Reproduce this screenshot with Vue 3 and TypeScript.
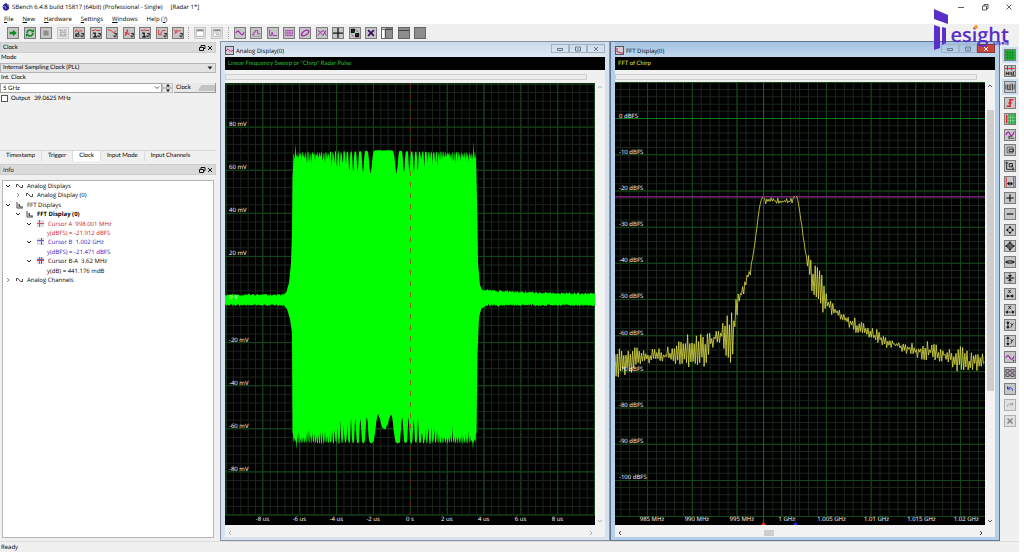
<script setup lang="ts">
import { ref } from 'vue'

interface Part { d: string; s?: string; f?: string; w?: number }
interface Icon { name: string; parts: Part[]; cls?: string }
interface TreeRow { depth: number; open?: boolean; icon?: 'wave' | 'fft' | 'a' | 'b' | 'ba'; text: string; tone?: string }

const K = '#111'
const P = '#a020a8'
const R = '#e0202c'
const G = '#0d8a22'
const B = '#3434c8'
const tag: Part = { d: 'M8.5 6.5h3v2h-2M11.5 10.5h-3v-2', s: K, w: 1 }
const frame: Part = { d: 'M2.5 2.5h7v7h-7z', s: '#555' }

const mainIcons: Icon[] = [
  { name: 'Start', parts: [{ d: 'M2 4.500h4V2l4.500 4L6 10V7.500H2z', f: G }] },
  { name: 'Start loop', parts: [{ d: 'M2.500 6a3.500 3.500 0 0 1 6-2.500M9.500 6a3.500 3.500 0 0 1-6 2.500', s: G, w: 2 }, { d: 'M7 5h4V1zM5 7H1v4z', f: G }] },
  { name: 'Stop', parts: [{ d: 'M3 3h6v6H3z', f: '#8d8d8d' }] },
  { name: 'Force trigger', cls: 'flat', parts: [{ d: 'M1.500 2.500h4M7 2.500h3M2 5h8M2 7.500h3M6.500 7.500h4M2 9.500h8', s: '#888' }] },
  { name: 'Average', parts: [{ d: 'M1 5l2-3 2 3 2-2 3 1', s: R }, { d: 'M2 10l4-5M2 7h4v3H2z', s: K }, tag] },
  { name: 'Info', parts: [{ d: 'M1 3h3l1-1 2 1h4', s: R }, { d: 'M2.500 6H5v4M2.500 10.500h5', s: K, w: 1.5 }, tag] },
  { name: 'Line graph', parts: [{ d: 'M1 2l4 1 3 3 3-3', s: R }, tag] },
  { name: 'Spectrum graph', parts: [{ d: 'M1 9h1V5l1 3 1-6 1 6 2-1', s: R }, tag] },
  { name: 'Info graph', parts: [{ d: 'M1 3h3l1-1 2 1h4', s: R }, { d: 'M2.500 6H5v4M2.500 10.500h5', s: K, w: 1.5 }, tag] },
  { name: 'Bar graph', parts: [{ d: 'M2 2v6h3V5l2-2h3', s: R }, tag] },
  { name: 'Scatter graph', parts: [{ d: 'M1 2l4 4M5 2L2 7M5 4l4-1', s: R }, tag] }
]
const reportIcons: Icon[] = [
  { name: 'Report', cls: 'flat', parts: [{ d: 'M1.500 2h9v8h-9z', s: '#aaa', f: '#fff' }, { d: 'M2 3h8', s: '#888', w: 2 }] },
  { name: 'Report list', cls: 'flat', parts: [{ d: 'M1.500 2h9v8h-9z', s: '#aaa', f: '#fff' }, { d: 'M2 3h8', s: '#888', w: 2 }, { d: 'M3 6h6M5 8h4', s: '#999' }] }
]
const displayIcons: Icon[] = [
  { name: 'Analog display', parts: [{ d: 'M1 6c2-4 3-3 5 0s3 3 5-1', s: P, w: 1.4 }] },
  { name: 'Digital display', parts: [{ d: 'M1 8h2.500V5H5V3h3v4h3', s: P }, { d: 'M1 10h10', s: '#999' }] },
  { name: 'FFT display', parts: [{ d: 'M2 2v7h2l1-4 1 4h5', s: P }] },
  { name: 'Table display', parts: [{ d: 'M1 3h10M1 5h10M1 7h10M1 9h10', s: P }, { d: 'M3 2v8M6 2v8M9 2v8', s: '#b99ac0' }] },
  { name: 'XY display', parts: [{ d: 'M2 9C1 6 7 1 10 3S5 11 2 9z', s: P, w: 1.4 }] },
  { name: 'Multi display', parts: [{ d: 'M1 9l3-4 3 4 4-6M1 3l3 2 4-2 3 6', s: P }] },
  { name: 'Cross', parts: [{ d: 'M6 0v12M0 6h12', s: K, w: 1.5 }] },
  { name: 'Cascade', parts: [{ d: 'M1 1h5v5H1zM6 6h5v5H6z', f: K }, { d: 'M3 3l6 6', s: G }, { d: 'M7 2l3 3M2 8l2 2', s: P }] },
  { name: 'Close all', parts: [{ d: 'M2.500 2.500l7 7M9.500 2.500l-7 7', s: '#301060', w: 2 }] },
  { name: 'Dock left', parts: [{ d: 'M0 0h4v12H0z', f: '#fff' }, { d: 'M0 1.500h12M4 2v10', s: '#222' }] },
  { name: 'Dock top', parts: [{ d: 'M0 3h12', s: '#333' }] },
  { name: 'Full screen', parts: [] }
]
displayIcons.slice(9).forEach(i => { i.cls = 'dark' })

const sideIcons: Icon[] = [
  { name: 'Grid', cls: 'on', parts: [{ d: 'M0 0h12v12H0z', f: '#26b33a' }, { d: 'M3 0v12M6 0v12M9 0v12M0 3h12M0 6h12M0 9h12', s: '#0a7a1c', w: 0.6 }] },
  { name: 'Hide', parts: [{ d: 'M0 3h12', s: R }, { d: 'M3 0v5M8 0v5', s: B }, { d: 'M1.500 7v4M4 7v4M1.500 9H4M6 7v4M8 7v4h1.500M11.500 7H10v4h1.500', s: K }] },
  { name: 'Signals', cls: 'on', parts: [{ d: 'M1 3v6M3 3v6h2V3M5 9h2V2M9 2v8M11 3v6', s: '#333' }] },
  { name: 'Trigger slope', parts: [{ d: 'M2 10h4V2h4M4 6h4', s: R, w: 1.8 }] },
  { name: 'Scale', parts: [{ d: 'M4 0h8v12H4z', f: '#28aa3c' }, { d: 'M2 1v10M1 3h2M1 6h2M1 9h2', s: R, w: 1.5 }, { d: 'M6.500 0v12M9.500 0v12M4 4h8M4 8h8', s: '#bce8c0', w: 0.6 }] },
  { name: 'Measure', parts: [{ d: 'M1 6c2-5 4-4 5-1s3 2 5-3', s: P, w: 1.4 }, { d: 'M4 8h5M4 10h7M5 7v3', s: '#444' }] },
  { name: 'Zoom box', parts: [frame, { d: 'M5 5h5v3H5z', s: K }] },
  { name: 'Zoom axes', parts: [{ d: 'M2 1v9h9M2 1L1 3M2 1l1 2M11 10l-2-1M11 10l-2 1', s: K }, { d: 'M5 3h4v4H5zM7 5l3 3', s: K }] },
  { name: 'Cursors', parts: [{ d: 'M1.500 0v12', s: R }, { d: 'M10.500 0v12', s: B }, { d: 'M3 8h6M3 8l2-2v4zM9 8L7 6v4z', s: K, f: K, w: 0.7 }] },
  { name: 'Zoom in', parts: [{ d: 'M6 1.500v9M1.500 6h9', s: K, w: 1.4 }] },
  { name: 'Zoom out', parts: [{ d: 'M2 6h8', s: K, w: 1.4 }] },
  { name: 'Expand', parts: [{ d: 'M1 6l3-2v4zM11 6L8 4v4zM6 1L4 4h4zM6 11L4 8h4z', f: K }] },
  { name: 'Fit', parts: [{ d: 'M3.500 3.500h5v5h-5z', f: '#666', s: '#444' }, { d: 'M0 6l3-2v4zM12 6L9 4v4zM6 0L4 3h4zM6 12L4 9h4z', f: K }] },
  { name: 'Fit horizontal', parts: [{ d: 'M3.500 4.500h5v3h-5z', f: '#888', s: '#333' }, { d: 'M0 6l3-2v4zM12 6L9 4v4z', f: K }] },
  { name: 'Fit vertical', parts: [{ d: 'M1 6h10', s: '#333', w: 1.6 }, { d: 'M6 5L4 3h4zM6 7L4 9h4zM6 0v4M6 8v4', f: K, s: K, w: 0.7 }] },
  { name: 'X compress', parts: [{ d: 'M4 1l3 4M7 1L4 5', s: K }, { d: 'M1 8.500h10M5 8.500L3 7v3zM7 8.500L9 7v3z', s: K, f: K, w: 0.8 }] },
  { name: 'X expand', parts: [{ d: 'M4 1l3 4M7 1L4 5', s: K }, { d: 'M1 8.500h10M1 8.500L3 7v3zM11 8.500L9 7v3z', s: K, f: K, w: 0.8 }] },
  { name: 'Y compress', parts: [{ d: 'M3.500 1v10M3.500 5L2 3h3zM3.500 7L2 9h3z', s: K, f: K, w: 0.8 }, { d: 'M7 4l1.500 2L10 4M8.500 6L7 9', s: K }] },
  { name: 'Y expand', parts: [{ d: 'M3.500 1v10M3.500 1L2 3h3zM3.500 11L2 9h3z', s: K, f: K, w: 0.8 }, { d: 'M7 4l1.500 2L10 4M8.500 6L7 9', s: K }] },
  { name: 'Waveform', parts: [{ d: 'M1 7c2-4 3-3 5 0s3 2 5-2', s: P, w: 1.4 }, { d: 'M9 11h2V9z', f: K }] },
  { name: 'Table', parts: [{ d: 'M1 2h4v3H1zM7 2h4v3H7zM1 7h4v3H1zM7 7h4v3H7z', s: '#333' }, { d: 'M5 3h2M5 9h2', s: P }] },
  { name: 'Undo', parts: [{ d: 'M3 3v3h3M3 6c2-3 6-2 6 2', s: B, w: 1.2 }] },
  { name: 'Redo', cls: 'pale', parts: [{ d: 'M9 3v3H6M9 6C7 3 3 4 3 8', s: '#999' }] },
  { name: 'Delete', cls: 'pale', parts: [{ d: 'M3 3l6 6M9 3l-6 6', s: '#888', w: 2 }] }
]

const groups = [
  { key: 'main', icons: mainIcons },
  { key: 'report', icons: reportIcons },
  { key: 'display', icons: displayIcons }
]
const menus = [['F', 'ile'], ['N', 'ew'], ['H', 'ardware'], ['S', 'ettings'], ['W', 'indows']]
const tabs = ['Timestamp', 'Trigger', 'Clock', 'Input Mode', 'Input Channels']
const activeTab = ref('Clock')
const rate = ref('5 GHz')
const output = ref(false)

const tree: TreeRow[] = [
  { depth: 0, open: true, icon: 'wave', text: 'Analog Displays' },
  { depth: 1, open: false, icon: 'wave', text: 'Analog Display (0)' },
  { depth: 0, open: true, icon: 'fft', text: 'FFT Displays' },
  { depth: 1, open: true, icon: 'fft', text: 'FFT Display (0)', tone: 'strong' },
  { depth: 2, open: true, icon: 'a', text: 'Cursor A  998.001 MHz', tone: 'red' },
  { depth: 2, text: 'y(dBFS) = -21.912 dBFS', tone: 'red' },
  { depth: 2, open: true, icon: 'b', text: 'Cursor B  1.002 GHz', tone: 'blue' },
  { depth: 2, text: 'y(dBFS) = -21.471 dBFS', tone: 'blue' },
  { depth: 2, open: true, icon: 'ba', text: 'Cursor B-A  3.62 MHz' },
  { depth: 2, text: 'y(dB) = 441.176 mdB' },
  { depth: 0, open: false, icon: 'wave', text: 'Analog Channels' }
]

const W = 370
const H = 442
function noise(seed: number) {
  let s = seed
  return () => {
    s = (s * 1664525 + 1013904223) % 4294967296
    return s / 4294967296
  }
}
function lines(origin: number, step: number, limit: number, vertical: boolean, end: number, start = 0) {
  let d = ''
  const first = Math.ceil((start - origin) / step)
  for (let k = first; origin + k * step <= limit; k++) {
    const v = (origin + k * step).toFixed(1)
    d += vertical ? `M${v} 0V${end}` : `M0 ${v}H${W}`
  }
  return d
}
type Key = [number, number, number]
function sample(keys: Key[], x: number): [number, number] {
  for (let i = 1; i < keys.length; i++) {
    if (x <= keys[i][0]) {
      const a = keys[i - 1]
      const b = keys[i]
      const t = (x - a[0]) / (b[0] - a[0])
      return [a[1] + (b[1] - a[1]) * t, a[2] + (b[2] - a[2]) * t]
    }
  }
  const l = keys[keys.length - 1]
  return [l[1], l[2]]
}

function chirp() {
  const rnd = noise(11)
  const upKeys: Key[] = [[0, 213, 1], [58, 213, 1], [61, 211, 1], [64, 200, 0], [66, 180, 0], [67, 150, 0], [67.5, 95, 0], [69, 70, 0], [249.500, 68, 0], [251, 75, 0], [252.500, 140, 0], [253, 180, 0], [255, 202, 0], [257, 208, 1], [270, 209, 1], [310, 211, 1], [370, 212, 1]]
  const dnKeys: Key[] = [[0, 221, 1], [59, 221, 1], [62, 226, 0], [65, 236, 0], [67, 250, 0], [67.5, 350, 0], [251.500, 350, 0], [252.500, 270, 0], [254, 235, 0], [256, 225, 1], [262, 221, 1], [370, 221, 1]]
  const up: string[] = []
  const dn: string[] = []
  for (let x = 0; x <= W; x += 0.5) {
    let [t, ta] = sample(upKeys, x)
    let [b, ba] = sample(dnKeys, x)
    if (x > 68 && x < 251) {
      const u = Math.abs(x - 158.500)
      const v = Math.abs(x - 159.500)
      const pu = Math.pow(Math.abs(Math.cos(Math.PI * (u * u - 169) / 251)), 6)
      const pv = Math.pow(Math.abs(Math.cos(Math.PI * (v * v - 42) / 270)), 6)
      const r = u > 36 ? 0.15 + rnd() * 0.85 : 1
      t = 67 + Math.min(u / 20, 3) + pu * r * (24 - u * 0.1) + (u > 36 ? rnd() * 3 - 2 : 0)
      b = 361 - pv * r * (29 - v * 0.15) - rnd() * 2
      if (x === 70.500) t = 61
      if (x === 248.500) t = 58
      if (x === 71.500 || x === 248) b = 367
    } else {
      t -= ta * rnd() * 2.500
      b += ba * rnd() * 2.500
    }
    up.push(`${x} ${t.toFixed(1)}`)
    dn.unshift(`${x} ${b.toFixed(1)}`)
  }
  return `M${up.join('L')}L${dn.join('L')}Z`
}

function spectrum() {
  const rnd = noise(5)
  const keys: Key[] = [
    [0, 280, 17], [20, 277, 13], [28, 275, 7], [50, 273, 9], [62, 270, 14], [70, 268, 17], [92, 268, 17], [96, 258, 8], [106, 252, 9],
    [110, 256, 22], [112, 258, 32], [119, 254, 36], [120, 232, 16], [124, 217, 11], [130, 200, 8], [136, 186, 5], [140, 160, 1], [144, 128, 0],
    [146, 118, 0], [148, 114, 0], [150, 119, 3], [153, 118, 3], [165, 119, 3], [177, 119, 3], [179, 115, 1], [181, 113, 0], [183, 118, 0],
    [187, 145, 1], [190, 167, 4], [193, 182, 10], [198, 198, 18], [204, 206, 25], [209, 213, 18], [214, 224, 7], [225, 232, 6], [240, 243, 8],
    [255, 250, 6], [265, 256, 8], [280, 262, 5], [300, 268, 7], [315, 269, 12], [330, 272, 7], [345, 277, 14], [360, 280, 8], [370, 280, 10]]
  const pts: string[] = []
  let sign = 1
  for (let x = 0; x <= W; x += 1.1) {
    const [y, a] = sample(keys, x)
    sign = -sign
    const r = rnd()
    const k = a > 12 ? 0.35 + r * 0.65 : r
    pts.push(`${x.toFixed(1)} ${(y + sign * a * k).toFixed(1)}`)
  }
  return 'M' + pts.join('L')
}

const analog = {
  minor: lines(185.3, 7.37, W, true, 432) + lines(216.5, 8.62, 432, false, 0),
  major: lines(185.3, 36.87, W, true, 432) + lines(216.5, 43.1, 433, false, 0),
  y: [80, 60, 40, 20, 0, -20, -40, -60, -80].map(v => ({ t: v === 0 ? '0 V' : `${v} mV`, at: (216.5 - v * 2.155) / H * 100 })),
  x: [-8, -6, -4, -2, 0, 2, 4, 6, 8].map(v => ({ t: v === 0 ? '0 s' : `${v} us`, at: (185 + v * 18.43) / W * 100 })),
  trace: chirp()
}
const fft = {
  minor: lines(166.7, 8.94, W, true, 433) + lines(36.5, 7.22, 433, false, 0),
  major: lines(166.7, 44.7, W, true, 433) + lines(36.5, 36.1, 434, false, 0),
  y: Array.from({ length: 11 }, (_, i) => ({ t: `${i ? -i * 10 : 0} dBFS`, at: (36.5 + i * 36.1) / H * 100 })),
  x: ['985 MHz', '990 MHz', '995 MHz', '1 GHz', '1.005 GHz', '1.01 GHz', '1.015 GHz', '1.02 GHz'].map((t, i) => ({ t, at: (37 + i * 44.9) / W * 100 })),
  trace: spectrum()
}
const windows = [
  { key: 'analog', title: 'Analog Display(0)', note: 'Linear Frequency Sweep or "Chirp" Radar Pulse', plot: analog },
  { key: 'fft', title: 'FFT Display(0)', note: 'FFT of Chirp', plot: fft }
]
</script>

<template>
  <div class="app">
    <header class="titlebar">
      <svg class="appicon" viewBox="0 0 8 8"><path d="M1 2l3-2 3 2v4L4 8 1 6z" fill="#27238a" /><path d="M0 4l3-1 1 3M5 1l2 3" stroke="#8d8be0" fill="none" /></svg>
      <span class="apptitle">SBench 6.4.8 build 15817 (64bit) (Professional - Single)</span>
      <span>[Radar 1*]</span>
      <div class="winctl">
        <button aria-label="Minimize"><svg viewBox="0 0 8 8"><path d="M1 4.500h6" /></svg></button>
        <button aria-label="Restore"><svg viewBox="0 0 8 8"><path d="M1.500 3h4v4h-4zM3 3V1.500h4v4H5.500" /></svg></button>
        <button aria-label="Close"><svg viewBox="0 0 8 8"><path d="M1.500 1.500l5 5M6.500 1.500l-5 5" /></svg></button>
      </div>
    </header>
    <nav class="menubar">
      <button v-for="m in menus" :key="m[1]"><u>{{ m[0] }}</u>{{ m[1] }}</button>
      <button>Help (<u>?</u>)</button>
    </nav>
    <div class="toolbar">
      <div v-for="g in groups" :key="g.key" class="group" :class="g.key">
        <button v-for="i in g.icons" :key="i.name" class="tool" :class="i.cls" :aria-label="i.name">
          <svg viewBox="0 0 12 12"><path v-for="(p, n) in i.parts" :key="n" :d="p.d" :stroke="p.s || 'none'" :fill="p.f || 'none'" :stroke-width="p.w || 1" /></svg>
        </button>
      </div>
    </div>

    <div class="main">
      <aside class="dock">
        <section class="panel clock">
          <h2 class="head"><span>Clock</span>
            <button aria-label="Float panel"><svg viewBox="0 0 8 8"><path d="M1.500 3.500h4v3h-4zM3 3.500v-2h4v3H5.500" /></svg></button>
            <button aria-label="Close panel"><svg viewBox="0 0 8 8"><path d="M2 2l4 4M6 2L2 6" /></svg></button>
          </h2>
          <label for="mode" class="lbl">Mode</label>
          <div class="pick">
            <select id="mode"><option>Internal Sampling Clock (PLL)</option></select>
            <svg viewBox="0 0 6 4"><path d="M0.500 0.500h5L3 3.500z" /></svg>
          </div>
          <label for="rate" class="lbl">Int. Clock</label>
          <div class="rate">
            <div class="combo"><input id="rate" v-model="rate" type="text"><svg viewBox="0 0 6 4"><path d="M1 0.500l2 2 2-2" /></svg></div>
            <div class="spin">
              <button aria-label="Increase"><svg viewBox="0 0 6 3"><path d="M1 2.500h4L3 0z" /></svg></button>
              <button aria-label="Decrease"><svg viewBox="0 0 6 3"><path d="M1 0.500h4L3 3z" /></svg></button>
            </div>
            <button class="calc"><span>Clock</span><i></i></button>
          </div>
          <label class="out"><input v-model="output" type="checkbox"><span>Output</span><span>39.0625 MHz</span></label>
        </section>
        <div class="tabs" role="tablist">
          <button v-for="t in tabs" :key="t" role="tab" :aria-selected="t === activeTab" :class="{ active: t === activeTab }" @click="activeTab = t">{{ t }}</button>
        </div>
        <section class="panel info">
          <h2 class="head"><span>Info</span>
            <button aria-label="Float panel"><svg viewBox="0 0 8 8"><path d="M1.500 3.500h4v3h-4zM3 3.500v-2h4v3H5.500" /></svg></button>
            <button aria-label="Close panel"><svg viewBox="0 0 8 8"><path d="M2 2l4 4M6 2L2 6" /></svg></button>
          </h2>
          <div class="treebox">
            <ul class="tree">
              <li v-for="r in tree" :key="r.text" :class="['d' + r.depth, r.tone]">
                <svg class="chev" viewBox="0 0 6 6"><path v-if="r.open === true" d="M1 2l2 2 2-2" /><path v-if="r.open === false" d="M2 1l2 2-2 2" class="shut" /></svg>
                <svg v-if="r.icon" class="ricon" viewBox="0 0 8 8">
                  <path v-if="r.icon === 'wave'" d="M0.500 5V2.500h1.500l2.500 3H6.500V3" stroke="#444" />
                  <path v-else-if="r.icon === 'fft'" d="M1 1v6h6M3 6V3l1 3h3" stroke="#444" />
                  <template v-else>
                    <rect width="7" height="7" fill="#e3dbe6" />
                    <path v-if="r.icon !== 'b'" d="M2.500 0v7M0 3.500h7" stroke="#d94a5a" />
                    <path v-if="r.icon !== 'a'" d="M4.500 0v7M0 2.500h7" stroke="#6a5cd0" />
                  </template>
                </svg>
                <span>{{ r.text }}</span>
              </li>
            </ul>
          </div>
        </section>
      </aside>

      <main class="mdi">
        <section v-for="w in windows" :key="w.key" class="win" :class="w.key">
          <header class="wtitle">
            <svg class="wicon" viewBox="0 0 9 9"><rect x="0.500" y="0.500" width="8" height="8" fill="#d5cdd5" stroke="#555" /><path v-if="w.key === 'analog'" d="M1 5c2-4 3 0 4 0s2 1 3-1" stroke="#a02080" fill="none" /><path v-else d="M2 2v4h2l1 1h3" stroke="#c02050" fill="none" /></svg>
            <span>{{ w.title }}</span>
            <div class="wbtns">
              <button aria-label="Minimize"><svg viewBox="0 0 8 6"><path d="M1.500 2.500h5v2h-5z" /></svg></button>
              <button aria-label="Maximize"><svg viewBox="0 0 8 6"><path d="M1.500 1h5v4h-5zM3 3h2" /></svg></button>
              <button aria-label="Close" class="x"><svg viewBox="0 0 8 6"><path d="M2 1l4 4M6 1L2 5" /></svg></button>
            </div>
          </header>
          <div class="content">
            <div class="note">{{ w.note }}</div>
            <div class="range"></div>
            <div class="view">
              <div class="plot">
                <svg viewBox="0 0 370 442" preserveAspectRatio="none" class="chart">
                  <path :d="w.plot.minor" class="minor" />
                  <path :d="w.plot.major" class="major" />
                  <template v-if="w.key === 'analog'">
                    <path d="M185.500 0V432" class="zero dim" />
                    <path :d="w.plot.trace" fill="#00ff00" />
                    <path d="M185.500 88V350" class="zero" />
                  </template>
                  <template v-else>
                    <path d="M0 36.500H370" stroke="#0b7a16" />
                    <path d="M0 114.500H370" stroke="#7a207c" stroke-width="1.500" />
                    <path :d="w.plot.trace" class="trace" />
                    <path d="M148.500 0V442" stroke="#a81818" />
                    <path d="M180.500 112V442" stroke="#1212b8" />
                    <path d="M180.500 0V112" stroke="#101060" />
                    <path d="M146 442l2.500-3 2.500 3z" fill="#f22" />
                    <path d="M178 442l2.500-3 2.500 3z" fill="#22f" />
                  </template>
                </svg>
                <span v-for="l in w.plot.y" :key="l.t" class="ylab" :style="{ top: l.at + '%' }">{{ l.t }}</span>
                <span v-for="l in w.plot.x" :key="l.t" class="xlab" :style="{ left: l.at + '%' }">{{ l.t }}</span>
              </div>
              <div class="vbar"><svg viewBox="0 0 6 4"><path d="M1 3l2-2 2 2" /></svg><i></i><svg viewBox="0 0 6 4"><path d="M1 1l2 2 2-2" /></svg></div>
            </div>
            <div class="hbar"><svg viewBox="0 0 4 6"><path d="M3 1L1 3l2 2" /></svg><i></i><svg viewBox="0 0 4 6"><path d="M1 1l2 2-2 2" /></svg></div>
          </div>
        </section>
      </main>

      <div class="side">
        <button v-for="i in sideIcons" :key="i.name" class="tool" :class="i.cls" :aria-label="i.name">
          <svg viewBox="0 0 12 12"><path v-for="(p, n) in i.parts" :key="n" :d="p.d" :stroke="p.s || 'none'" :fill="p.f || 'none'" :stroke-width="p.w || 1" /></svg>
        </button>
      </div>
    </div>
    <footer class="status">Ready</footer>

    <div class="brand">
      <svg viewBox="0 0 16 42"><path d="M0 0l14 6v9L0 10z" /><path d="M0 16l6 2v21l-6 2z" /><path d="M8 18l4 1v15l-4 2z" /></svg>
      <span class="word">esight</span>
      <i class="dot"></i>
      <span class="cn">科技有限</span>
    </div>
  </div>
</template>

<style>
body { background: #fff; }
</style>

<style scoped>
* { box-sizing: border-box; }
.app { position: relative; display: flex; flex-direction: column; min-height: 100vh; margin-right: 5px; font: 6px/8px "Open Sans", "Noto Sans", "Noto Sans CJK SC", sans-serif; text-rendering: geometricPrecision; color: #000; background: #f0f0f0; }
button { font: inherit; color: inherit; padding: 0; margin: 0; border: 0; background: none; text-rendering: inherit; }
svg { display: block; fill: none; }
.titlebar { display: flex; align-items: center; height: 13px; padding-left: 2px; background: #fff; }
.appicon { width: 8px; height: 8px; margin-right: 2px; }
.apptitle { margin-right: 8px; }
.winctl { display: flex; gap: 16px; margin-left: auto; padding-right: 6px; }
.winctl svg { width: 8px; height: 8px; stroke: #333; stroke-width: 0.8; }
.menubar { display: flex; align-items: center; gap: 9px; height: 11px; padding-left: 4px; background: #fff; }
.toolbar { display: flex; align-items: center; height: 17px; padding-left: 7px; background: #f0f0f0; }
.group { display: flex; justify-content: space-between; position: relative; }
.group + .group { margin-left: 10px; }
.group + .group::before { content: ""; position: absolute; left: -6px; top: 0; height: 12px; border-left: 1px dotted #aaa; }
.group.main { width: 177px; }
.group.report { width: 29px; }
.group.display { width: 192px; margin-left: 11px; }
.tool { width: 12px; height: 12px; background: #c6c6c6; border: 1px solid #7c7c7c; }
.tool svg { width: 10px; height: 10px; }
.tool.flat { background: #e6e6e6; border-color: #c8c8c8; }
.tool.dark { background: #8e8e8e; border-color: #666; }
.tool.pale { background: #e0e0e0; border-color: #b0b0b0; }
.tool.on { outline: 2px solid #c5e0f5; }

.app > .main { flex: 1; display: flex; min-height: 0; }
.dock { width: 220px; flex: none; display: flex; flex-direction: column; padding: 1px 4px 3px 0; }
.panel { display: flex; flex-direction: column; }
.clock { height: 108px; }
.clock, .tabs, .note { font-family: Lato, "Open Sans", sans-serif; }
.head { display: flex; align-items: center; height: 11px; margin: 0; padding: 0 1px 0 2px; font-size: 6px; font-weight: 400; background: #dadada; border: 1px solid #cfcfcf; }
.head span { flex: 1; }
.head svg { width: 8px; height: 8px; stroke: #111; }
.lbl { height: 10px; line-height: 10px; padding-left: 1px; }
.pick { display: flex; position: relative; height: 10px; }
.pick select { appearance: none; width: 100%; height: 10px; font: inherit; text-rendering: inherit; padding: 0 2px; border: 1px solid #b4b4b4; background: #e2e2e2; color: inherit; }
.pick svg { position: absolute; right: 3px; top: 3px; width: 6px; height: 4px; fill: #222; }
.rate { display: flex; height: 10px; }
.combo { position: relative; flex: 1; }
.combo input { width: 100%; height: 10px; display: block; font: inherit; text-rendering: inherit; padding: 0 2px; border: 1px solid #a6a6a6; background: #fff; color: inherit; }
.combo svg { position: absolute; right: 2px; top: 3px; width: 6px; height: 4px; stroke: #555; }
.spin { width: 11px; display: flex; flex-direction: column; }
.spin button { flex: 1; display: flex; align-items: center; justify-content: center; border: 1px solid #c0c0c0; background: #e8e8e8; }
.spin svg { width: 6px; height: 3px; fill: #111; }
.calc { width: 42px; margin-left: 1px; display: flex; align-items: center; padding-left: 2px; background: #e8e8e8; border-right: 1px solid #999; border-bottom: 1px solid #999; }
.calc i { flex: 1; height: 6px; margin-left: 6px; background: linear-gradient(120deg, #e8e8e8 20%, #c4c4c4 21%); }
.out { display: flex; align-items: center; height: 11px; gap: 4px; padding-left: 1px; }
.out input { appearance: none; width: 7px; height: 7px; margin: 0 -1px 0 0; border: 1px solid #555; background: #fff; }
.tabs { display: flex; height: 13px; border-top: 1px solid #d6d6d6; padding-bottom: 2px; }
.tabs button { padding: 0 6px; border-right: 1px solid #dcdcdc; }
.tabs button:last-child { border: 0; }
.tabs .active { background: #fff; }
.info { flex: 1; margin-top: 1px; }
.treebox { flex: 1; margin: 5px 2px 0; background: #fff; border: 1px solid #b4b4b4; }
.tree { display: flex; flex-direction: column; height: 104px; margin: 0; padding: 0; list-style: none; white-space: pre; }
.tree li { flex: 1; display: flex; align-items: center; padding-left: 2px; }
.tree .d1 { padding-left: 12px; }
.tree .d2 { padding-left: 23px; }
.chev { width: 6px; height: 6px; margin-right: 5px; stroke: #222; }
.chev .shut { stroke: #888; }
.ricon { width: 8px; height: 8px; margin-right: 3px; }
.chev + span { margin-left: 10px; }
.strong { font-weight: 700; }
.red { color: #cc2030; }
.blue { color: #2a20c0; }

.mdi { flex: 1; display: grid; grid-template-columns: 1fr 1fr; min-width: 0; }
.win { display: flex; flex-direction: column; padding: 0 4px 3px; border: 1px solid #8593a5; background: #d6e2f0; min-width: 0; }
.win.fft { background: #b7d0ea; border-color: #5c7890; }
.wtitle { display: flex; align-items: center; height: 15px; gap: 2px; padding-top: 2px; }
.analog .wtitle { background: linear-gradient(#c9d9ea, #dfe9f4); }
.fft .wtitle { background: linear-gradient(#a2c0e0, #c2d8ee); }
.wicon { width: 9px; height: 9px; }
.wbtns { display: flex; margin-left: auto; align-self: flex-start; }
.wbtns button { width: 18px; height: 9px; display: flex; align-items: center; justify-content: center; border: 1px solid #a3b2c4; }
.wbtns svg { width: 8px; height: 6px; stroke: #67788c; }
.fft .wbtns .x { background: #c8443c; border-color: #8a3a38; }
.fft .wbtns .x svg { stroke: #fff; }
.content { flex: 1; display: flex; flex-direction: column; background: #f0f0f0; }
.note { height: 13px; line-height: 13px; padding-left: 3px; background: #000; color: #24c032; }
.fft .note { color: #e0e034; }
.range { height: 6px; margin: 4px 18px 3px 0; border: 1px solid #cfcfcf; background: #ebebeb; }
.fft .range { margin-bottom: 2px; }
.view { flex: 1; display: flex; }
.plot { position: relative; flex: 1; overflow: hidden; background: #000; }
.chart { position: absolute; width: 100%; height: 100%; }
.minor { stroke: #1a261b; }
.major { stroke: #124a18; }
.zero { stroke: #b52a10; stroke-dasharray: 5 6; opacity: 0.7; }
.zero.dim { stroke: #7c1414; }
.trace { stroke: #dede48; stroke-width: 0.8; }
.ylab, .xlab { position: absolute; color: #fff; font-size: 6px; line-height: 8px; white-space: nowrap; }
.ylab { left: 4px; margin-top: -7px; }
.xlab { bottom: 2px; transform: translateX(-50%); }
.vbar { width: 10px; display: flex; flex-direction: column; align-items: center; padding: 2px 0; background: #f2f2f2; }
.vbar svg { width: 6px; height: 4px; stroke: #b0b0b0; }
.vbar i { flex: 1; }
.fft .vbar svg { stroke: #555; }
.fft .vbar i { width: 7px; margin: 22px 0 128px; background: #cdcdcd; }
.hbar { height: 12px; padding: 3px 12px 0 3px; display: flex; align-items: center; justify-content: space-between; background: #f2f2f2; }
.hbar svg { width: 4px; height: 6px; stroke: #aaa; }
.fft .hbar svg { stroke: #444; }
.fft .hbar i { width: 10px; height: 6px; background: #cdcdcd; margin-right: 64px; }
.side { width: 19px; height: 386px; flex: none; display: flex; flex-direction: column; align-items: center; justify-content: space-between; padding-top: 8px; }
.status { height: 11px; line-height: 11px; padding-left: 1px; border-top: 1px solid #dcdcdc; }

.brand { position: absolute; right: 10px; top: 9px; display: flex; color: #5a2fc8; }
.brand svg { width: 16px; height: 42px; fill: #5a2fc8; }
.word { font: 600 20px/26px "Open Sans", sans-serif; margin-top: 13px; }
.dot { position: absolute; left: 40px; top: 16px; width: 4px; height: 4px; border-radius: 50%; background: #f0a030; }
.cn { position: absolute; right: 0; top: 33px; font: 700 4px/5px "Noto Sans CJK SC", sans-serif; }
</style>
